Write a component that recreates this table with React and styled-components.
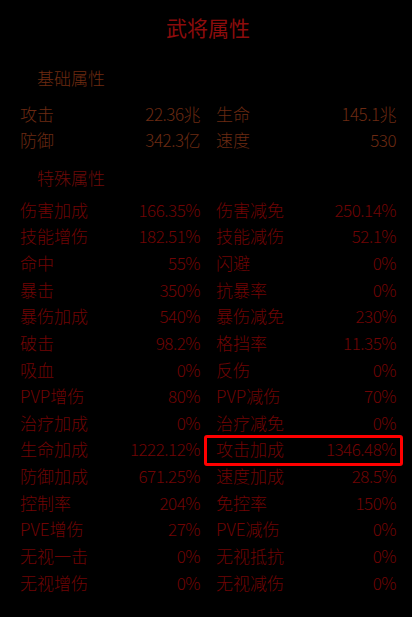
import React from "react";
import styled, { createGlobalStyle } from "styled-components";

const Global = createGlobalStyle`
  html, body { margin: 0; padding: 0; background: #000; }
  body { font-family: "Noto Sans CJK SC", "Noto Sans", sans-serif; }
`;

const Page = styled.div`
  width: 412px;
  min-height: 617px;
  box-sizing: border-box;
  background: #000;
  padding: 0 16px 0 20px;
  display: flex;
  flex-direction: column;
`;

const Title = styled.h1`
  margin: 14px 0 0;
  height: 26px;
  line-height: 26px;
  font-size: 21px;
  font-weight: 400;
  text-align: center;
  color: #8c0c0c;
`;

const SectionHeader = styled.div`
  margin-top: ${(p) => p.$mt}px;
  padding-left: 17px;
  height: 26px;
  line-height: 26px;
  font-size: 17px;
  font-weight: 300;
  color: ${(p) => p.$color};
`;

const Grid = styled.div`
  margin-top: ${(p) => p.$mt}px;
  display: grid;
  grid-template-columns: 180px 180px;
  column-gap: 16px;
  grid-auto-rows: ${(p) => p.$rowH}px;
  color: ${(p) => p.$color};
  font-size: 17px;
  font-weight: 300;
`;

const Pair = styled.div`
  position: relative;
  display: flex;
  align-items: center;
  justify-content: space-between;
  white-space: nowrap;
`;

const Label = styled.span``;
const Value = styled.span`
  letter-spacing: -0.5px;
`;

const Highlight = styled.div`
  position: absolute;
  left: -12px;
  right: -7px;
  top: -1px;
  bottom: -4px;
  border: 3px solid #ff0000;
  border-radius: 3px;
  pointer-events: none;
`;

const basic = [
  ["攻击", "22.36兆"],
  ["生命", "145.1兆"],
  ["防御", "342.3亿"],
  ["速度", "530"],
];

const special = [
  ["伤害加成", "166.35%"], ["伤害减免", "250.14%"],
  ["技能增伤", "182.51%"], ["技能减伤", "52.1%"],
  ["命中", "55%"], ["闪避", "0%"],
  ["暴击", "350%"], ["抗暴率", "0%"],
  ["暴伤加成", "540%"], ["暴伤减免", "230%"],
  ["破击", "98.2%"], ["格挡率", "11.35%"],
  ["吸血", "0%"], ["反伤", "0%"],
  ["PVP增伤", "80%"], ["PVP减伤", "70%"],
  ["治疗加成", "0%"], ["治疗减免", "0%"],
  ["生命加成", "1222.12%"], ["攻击加成", "1346.48%", true],
  ["防御加成", "671.25%"], ["速度加成", "28.5%"],
  ["控制率", "204%"], ["免控率", "150%"],
  ["PVE增伤", "27%"], ["PVE减伤", "0%"],
  ["无视一击", "0%"], ["无视抵抗", "0%"],
  ["无视增伤", "0%"], ["无视减伤", "0%"],
];

export default function App() {
  return (
    <Page>
      <Global />
      <Title>武将属性</Title>
      <SectionHeader $mt={25} $color="#6e2a10">基础属性</SectionHeader>
      <Grid $mt={9} $rowH={26} $color="#6c2a12">
        {basic.map(([l, v]) => (
          <Pair key={l}>
            <Label>{l}</Label>
            <Value>{v}</Value>
          </Pair>
        ))}
      </Grid>
      <SectionHeader $mt={13} $color="#6e0a08">特殊属性</SectionHeader>
      <Grid $mt={5} $rowH={26.64} $color="#700404">
        {special.map(([l, v, hl]) => (
          <Pair key={l}>
            <Label>{l}</Label>
            <Value>{v}</Value>
            {hl && <Highlight />}
          </Pair>
        ))}
      </Grid>
    </Page>
  );
}
